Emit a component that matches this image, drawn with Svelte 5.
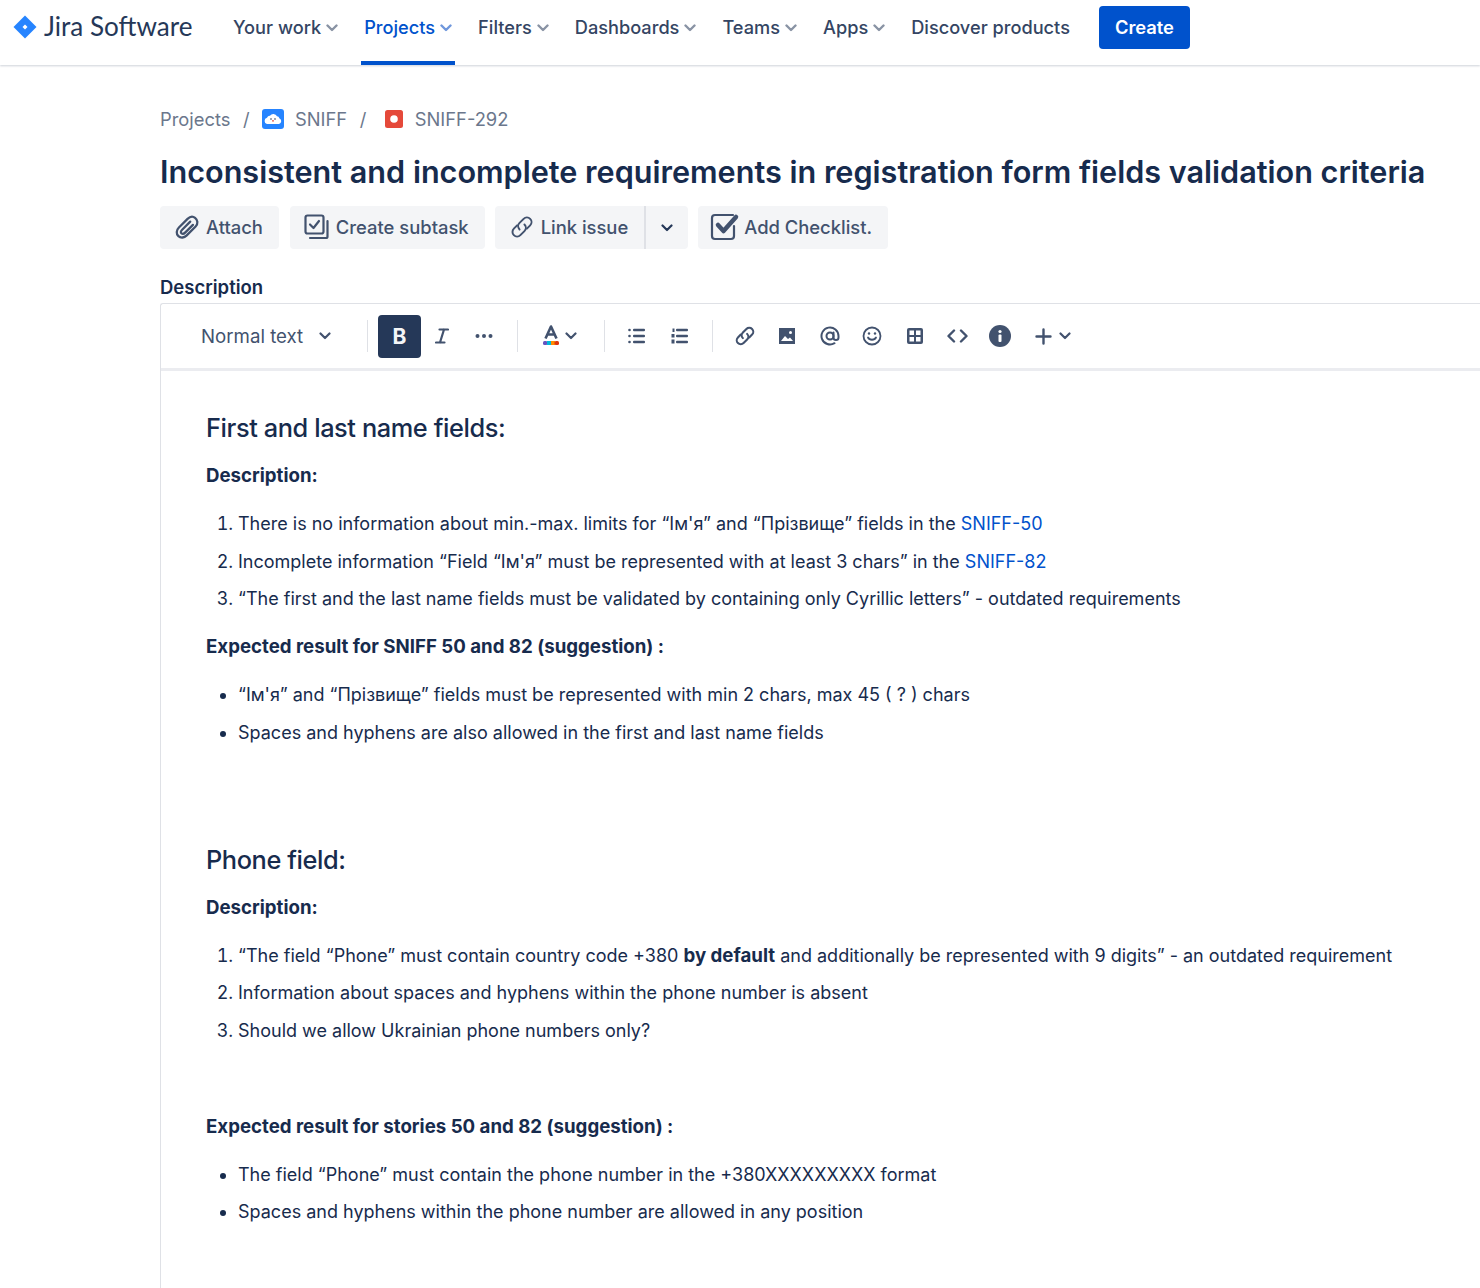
<script>
  const navItems = [
    { label: "Your work", caret: true },
    { label: "Projects", caret: true, active: true },
    { label: "Filters", caret: true },
    { label: "Dashboards", caret: true },
    { label: "Teams", caret: true },
    { label: "Apps", caret: true },
    { label: "Discover products", caret: false },
  ];
</script>

<header class="topbar">
  <div class="logo">
    <svg width="24" height="24" viewBox="0 0 24 24">
      <path d="M12 0.5 L23.5 12 L12 23.5 L0.5 12 Z" fill="#2684ff" />
      <path d="M12 9.5 L14.5 12 L12 14.5 L9.5 12 Z" fill="#fff" />
    </svg>
    <span class="wordmark">Jira Software</span>
  </div>
  <nav class="nav">
    {#each navItems as item}
      <div class="nav-item" class:active={item.active}>
        {item.label}
        {#if item.caret}
          <svg class="caret" width="12" height="8" viewBox="0 0 12 8"><path d="M1.5 1.5 L6 6 L10.5 1.5" fill="none" stroke="currentColor" stroke-width="2.4" stroke-linecap="round" stroke-linejoin="round" /></svg>
        {/if}
      </div>
    {/each}
  </nav>
  <button class="create">Create</button>
</header>

<main class="page">
  <div class="crumbs">
    <span>Projects</span>
    <span class="slash">/</span>
    <svg class="crumb-icon" width="22" height="22" viewBox="0 0 22 22">
      <rect width="22" height="20" y="1" rx="3" fill="#2684ff" />
      <path d="M5 16 a3.200 3.200 0 0 1 0 -6.200 a3 3 0 0 1 3 -2 a4 4 0 0 1 7 0.500 a2.500 2.500 0 0 1 2.300 2 a3 3 0 0 1 -0.300 5.700 Z" fill="#fff" />
      <circle cx="9" cy="11" r="0.800" fill="#253858" />
      <circle cx="13" cy="11" r="0.800" fill="#253858" />
      <circle cx="11" cy="12.800" r="0.900" fill="#e5493a" />
    </svg>
    <span>SNIFF</span>
    <span class="slash">/</span>
    <svg class="crumb-icon bug" width="18" height="18" viewBox="0 0 18 18">
      <rect width="18" height="18" rx="2.500" fill="#e5493a" />
      <circle cx="9" cy="9" r="3.800" fill="#fff" />
    </svg>
    <span>SNIFF-292</span>
  </div>

  <h1>Inconsistent and incomplete requirements in registration form fields validation criteria</h1>

  <div class="actions">
    <button class="action attach">
      <span class="slot">
        <svg width="28" height="28" viewBox="0 0 26 26" fill="none" stroke="#42526e" stroke-width="2.100" stroke-linecap="round"><path d="M20.500 4.500 C18 2.500 15.500 3.500 13.500 5.500 L5.500 13.500 C3 16 2.800 19.500 5 21.500 C7.200 23.500 10.500 23 12.500 21 L21 12.500 C23.500 10 23 6.500 20.500 4.500 M16 8 L8.500 15.500 C7 17 7 18.200 8 19 C9 19.800 10 19.600 11.500 18 L18.500 11" /></svg>
      </span>
      Attach
    </button>
    <button class="action">
      <span class="slot">
        <svg width="26" height="26" viewBox="0 0 26 26" fill="none" stroke="#42526e" stroke-width="2.200" stroke-linecap="round" stroke-linejoin="round"><rect x="1.500" y="1.500" width="18" height="18" rx="2" /><path d="M6 10.500 L9.500 14 L15 7" /><path d="M6 24 H22 a1.500 1.500 0 0 0 1.500 -1.500 V7" /></svg>
      </span>
      Create subtask
    </button>
    <div class="split">
      <button class="action joined">
        <span class="slot">
          <svg width="34" height="34" viewBox="0 0 26 26" fill="none" stroke="#42526e" stroke-width="1.700" stroke-linecap="round"><g transform="rotate(-45 13 13)"><path d="M11 9 H7 a4 4 0 0 0 0 8 H12 a4 4 0 0 0 4 -4" /><path d="M15 17 H19 a4 4 0 0 0 0 -8 H14 a4 4 0 0 0 -4 4" /></g></svg>
        </span>
        Link issue
      </button>
      <button class="action more">
        <svg width="12" height="8" viewBox="0 0 12 8"><path d="M1.500 1.500 L6 6 L10.500 1.500" fill="none" stroke="#253858" stroke-width="2.200" stroke-linecap="round" stroke-linejoin="round" /></svg>
      </button>
    </div>
    <button class="action">
      <span class="slot">
        <svg width="30" height="28" viewBox="0 0 30 28" fill="none" stroke="#42526e" stroke-linecap="round" stroke-linejoin="round"><path d="M23 2 H5 a3 3 0 0 0 -3 3 V23 a3 3 0 0 0 3 3 H21 a3 3 0 0 0 3 -3 V13" stroke-width="2.200" /><path d="M8 12 L13.500 18 L26 4" stroke-width="4.500" /></svg>
      </span>
      Add Checklist.
    </button>
  </div>

  <h2 class="field-label">Description</h2>

  <section class="editor">
    <div class="toolbar">
      <div class="style-picker">
        Normal text
        <svg width="12" height="8" viewBox="0 0 12 8"><path d="M1.500 1.500 L6 6 L10.500 1.500" fill="none" stroke="#42526e" stroke-width="2.200" stroke-linecap="round" stroke-linejoin="round" /></svg>
      </div>
      <span class="sep sep-a"></span>
      <button class="tool bold">B</button>
      <button class="tool italic">
        <svg width="14" height="16" viewBox="0 0 14 16" fill="none" stroke="#42526e" stroke-width="2.200" stroke-linecap="round"><path d="M4.500 1.500 H13 M1 14.500 H9.500 M9 1.500 L5 14.500" /></svg>
      </button>
      <button class="tool">
        <svg width="18" height="4" viewBox="0 0 18 4" fill="#42526e"><circle cx="2.500" cy="2" r="2" /><circle cx="9" cy="2" r="2" /><circle cx="15.500" cy="2" r="2" /></svg>
      </button>
      <span class="sep sep-b"></span>
      <div class="color-tool">
        <svg width="18" height="22" viewBox="0 0 18 22">
          <path d="M3.500 13.500 L9 1.500 L14.500 13.500 M5.500 9.500 H12.500" fill="none" stroke="#42526e" stroke-width="2.600" stroke-linejoin="round" />
          <rect x="1" y="16" width="4.500" height="4" rx="1.500" fill="#6554c0" />
          <rect x="5" y="16" width="4" height="4" fill="#00b8d9" />
          <rect x="9" y="16" width="4" height="4" fill="#ff8b00" />
          <rect x="12.500" y="16" width="4.500" height="4" rx="1.500" fill="#de350b" />
        </svg>
        <svg width="12" height="8" viewBox="0 0 12 8"><path d="M1.500 1.500 L6 6 L10.500 1.500" fill="none" stroke="#42526e" stroke-width="2.200" stroke-linecap="round" stroke-linejoin="round" /></svg>
      </div>
      <span class="sep sep-c"></span>
      <button class="tool">
        <svg width="17" height="16" viewBox="0 0 17 16" fill="#42526e"><circle cx="1.500" cy="2" r="1.300" /><circle cx="1.500" cy="8" r="1.300" /><circle cx="1.500" cy="14" r="1.300" /><rect x="5" y="0.800" width="12" height="2.400" rx="1" /><rect x="5" y="6.800" width="12" height="2.400" rx="1" /><rect x="5" y="12.800" width="12" height="2.400" rx="1" /></svg>
      </button>
      <button class="tool">
        <svg width="17" height="16" viewBox="0 0 17 16" fill="#42526e"><rect x="1.500" y="0.500" width="2" height="3.500" /><rect x="0.500" y="6" width="3" height="3.500" /><rect x="0.500" y="11.500" width="3" height="4" /><rect x="5" y="0.800" width="12" height="2.400" rx="1" /><rect x="5" y="6.800" width="12" height="2.400" rx="1" /><rect x="5" y="12.800" width="12" height="2.400" rx="1" /></svg>
      </button>
      <span class="sep sep-d"></span>
      <button class="tool">
        <svg width="26" height="26" viewBox="0 0 26 26" fill="none" stroke="#42526e" stroke-width="2.100" stroke-linecap="round"><g transform="rotate(-45 13 13)"><path d="M11 9 H7 a4 4 0 0 0 0 8 H12 a4 4 0 0 0 4 -4" /><path d="M15 17 H19 a4 4 0 0 0 0 -8 H14 a4 4 0 0 0 -4 4" /></g></svg>
      </button>
      <button class="tool">
        <svg width="16" height="16" viewBox="0 0 16 16"><rect width="16" height="16" fill="#42526e" /><circle cx="11.500" cy="4.500" r="1.500" fill="#fff" /><path d="M2 13 L6 8 L9 11 L11 9.500 L14 13 Z" fill="#fff" /></svg>
      </button>
      <button class="tool">
        <svg width="20" height="20" viewBox="0 0 20 20" fill="none" stroke="#42526e" stroke-width="2" stroke-linecap="round"><circle cx="10" cy="10" r="3.500" /><path d="M13.500 6.500 V11.500 a2.500 2.500 0 0 0 5 0 V10 a8.500 8.500 0 1 0 -4 7.200" /></svg>
      </button>
      <button class="tool">
        <svg width="20" height="20" viewBox="0 0 20 20" fill="none" stroke="#42526e" stroke-width="1.800" stroke-linecap="round"><circle cx="10" cy="10" r="8.500" /><path d="M6 11.500 C7.500 14.500 12.500 14.500 14 11.500" /><circle cx="7" cy="7.500" r="1.200" fill="#42526e" stroke="none" /><circle cx="13" cy="7.500" r="1.200" fill="#42526e" stroke="none" /></svg>
      </button>
      <button class="tool">
        <svg width="16" height="16" viewBox="0 0 16 16"><rect width="16" height="16" rx="2" fill="#42526e" /><rect x="2.500" y="2.500" width="4.500" height="4.500" fill="#fff" /><rect x="9" y="2.500" width="4.500" height="4.500" fill="#fff" /><rect x="2.500" y="9" width="4.500" height="4.500" fill="#fff" /><rect x="9" y="9" width="4.500" height="4.500" fill="#fff" /></svg>
      </button>
      <button class="tool">
        <svg width="21" height="14" viewBox="0 0 21 14" fill="none" stroke="#42526e" stroke-width="2.400" stroke-linecap="round" stroke-linejoin="round"><path d="M7 1.500 L1.500 7 L7 12.500 M14 1.500 L19.500 7 L14 12.500" /></svg>
      </button>
      <button class="tool">
        <svg width="22" height="22" viewBox="0 0 22 22"><circle cx="11" cy="11" r="11" fill="#42526e" /><circle cx="11" cy="6.500" r="1.600" fill="#fff" /><rect x="9.500" y="9.500" width="3" height="7.500" rx="1" fill="#fff" /></svg>
      </button>
      <div class="insert">
        <svg width="17" height="17" viewBox="0 0 17 17" fill="none" stroke="#42526e" stroke-width="2.400" stroke-linecap="round"><path d="M8.500 1.500 V15.500 M1.500 8.500 H15.500" /></svg>
        <svg width="12" height="8" viewBox="0 0 12 8"><path d="M1.500 1.500 L6 6 L10.500 1.500" fill="none" stroke="#42526e" stroke-width="2.200" stroke-linecap="round" stroke-linejoin="round" /></svg>
      </div>
    </div>

    <div class="doc">
      <h3>First and last name fields:</h3>
      <p><strong>Description:</strong></p>
      <ol>
        <li>There is no information about min.-max. limits for “Ім'я” and “Прізвище” fields in the <span class="link">SNIFF-50</span></li>
        <li>Incomplete information “Field “Ім'я” must be represented with at least 3 chars” in the <span class="link">SNIFF-82</span></li>
        <li>“The first and the last name fields must be validated by containing only Cyrillic letters” - outdated requirements</li>
      </ol>
      <p class="after-list"><strong>Expected result for SNIFF 50 and 82 (suggestion) :</strong></p>
      <ul>
        <li>“Ім'я” and “Прізвище” fields must be represented with min 2 chars, max 45 ( ? ) chars</li>
        <li>Spaces and hyphens are also allowed in the first and last name fields</li>
      </ul>

      <h3 class="second">Phone field:</h3>
      <p><strong>Description:</strong></p>
      <ol>
        <li>“The field “Phone” must contain country code +380 <strong>by default</strong> and additionally be represented with 9 digits” - an outdated requirement</li>
        <li>Information about spaces and hyphens within the phone number is absent</li>
        <li>Should we allow Ukrainian phone numbers only?</li>
      </ol>
      <p class="spaced"><strong>Expected result for stories 50 and 82 (suggestion) :</strong></p>
      <ul>
        <li>The field “Phone” must contain the phone number in the +380XXXXXXXXX format</li>
        <li>Spaces and hyphens within the phone number are allowed in any position</li>
      </ul>
    </div>
  </section>
</main>

<style>
  :global(body) {
    margin: 0;
    background: #fff;
    font-family: Inter, "Liberation Sans", sans-serif;
    color: #172b4d;
    overflow: hidden;
  }

  button {
    font-family: inherit;
    border: none;
    cursor: pointer;
  }

  .topbar {
    display: flex;
    align-items: stretch;
    height: 65px;
    padding-left: 13px;
    box-sizing: border-box;
    box-shadow: 0 1px 2px rgba(9, 30, 66, 0.2);
  }

  .logo {
    display: flex;
    align-items: center;
    gap: 7px;
    width: 217px;
    height: 54px;
  }

  .wordmark {
    font-family: Lato, sans-serif;
    font-size: 26.1px;
    padding-bottom: 2px;
    color: #253858;
  }

  .nav {
    display: flex;
    gap: 20px;
  }

  .nav-item {
    display: flex;
    align-items: center;
    gap: 5px;
    height: 54px;
    padding: 0 3px;
    box-sizing: border-box;
    font-size: 18.2px;
    font-weight: 500;
    color: #344563;
    white-space: nowrap;
  }

  .nav-item.active {
    color: #0052cc;
    border-bottom: 4px solid #0052cc;
    height: 65px;
    padding-bottom: 7px;
  }

  .caret {
    color: #8993a4;
    margin-top: 1px;
  }

  .nav-item.active .caret {
    color: #6f97dc;
  }

  .create {
    align-self: flex-start;
    margin-top: 6px;
    margin-left: 26px;
    width: 91px;
    height: 43px;
    padding: 0 0 2px;
    background: #0052cc;
    color: #fff;
    font-size: 18.33px;
    font-weight: 600;
    border-radius: 4px;
  }

  .page {
    padding-left: 160px;
  }

  .crumbs {
    display: flex;
    align-items: center;
    height: 28px;
    margin-top: 40px;
    font-size: 18.33px;
    color: #6b778c;
  }

  .slash {
    margin: 0 12.5px;
  }

  .crumb-icon {
    margin-right: 11px;
  }

  .crumb-icon.bug {
    margin-left: 6px;
    margin-right: 12px;
  }

  h1 {
    margin: 17px 0 0;
    font-size: 30.6px;
    line-height: 44px;
    font-weight: 600;
    color: #172b4d;
    white-space: nowrap;
  }

  .actions {
    display: flex;
    gap: 10px;
    margin-top: 12px;
  }

  .action {
    display: flex;
    align-items: center;
    gap: 4px;
    height: 43px;
    padding: 0 16px 2px 12px;
    background: #f4f5f7;
    color: #42526e;
    font-size: 18.4px;
    font-weight: 500;
    border-radius: 4px;
    white-space: nowrap;
  }

  .attach {
    margin-right: 1px;
  }

  .slot {
    display: flex;
    justify-content: center;
    width: 30px;
  }

  .split {
    display: flex;
  }

  .joined {
    border-radius: 4px 0 0 4px;
  }

  .more {
    width: 44px;
    padding: 0;
    justify-content: center;
    border-left: 2px solid #dfe1e6;
    border-radius: 0 4px 4px 0;
  }

  .field-label {
    margin: 25px 0 0;
    font-size: 18.5px;
    line-height: 26px;
    font-weight: 600;
    color: #172b4d;
  }

  .editor {
    margin-top: 3px;
    border-left: 1px solid #dfe1e6;
    border-top: 1px solid #dfe1e6;
    border-radius: 3px 0 0 0;
  }

  .toolbar {
    display: flex;
    align-items: center;
    height: 64px;
    border-bottom: 3px solid #ebecf0;
  }

  .style-picker {
    display: flex;
    align-items: center;
    gap: 16px;
    margin-left: 40px;
    font-size: 18.67px;
    font-weight: 400;
    color: #42526e;
  }

  .sep {
    width: 1px;
    height: 32px;
    background: #dfe1e6;
  }

  .sep-a { margin: 0 10px 0 36px; }
  .sep-b { margin: 0 24px 0 11px; }
  .sep-c { margin: 0 11px 0 27px; }
  .sep-d { margin: 0 11px 0 11px; }

  .tool {
    display: flex;
    align-items: center;
    justify-content: center;
    width: 42.5px;
    height: 43px;
    padding: 0;
    background: none;
    border-radius: 4px;
  }

  .tool.bold {
    background: #253858;
    color: #f4f5f7;
    font-size: 21px;
    font-weight: 700;
  }

  .color-tool,
  .insert {
    display: flex;
    align-items: center;
    gap: 5px;
  }

  .insert {
    margin-left: 14px;
    gap: 7px;
  }

  .doc {
    padding: 39px 0 80px 45px;
    font-size: 18px;
    line-height: 28px;
    color: #172b4d;
  }

  h3 {
    margin: 0;
    font-size: 25.33px;
    line-height: 36px;
    font-weight: 500;
    letter-spacing: -0.4px;
    color: #172b4d;
  }

  h3.second {
    margin-top: 95px;
  }

  p {
    margin: 16px 0 0;
  }

  p.after-list {
    margin-top: 20px;
  }

  p.spaced {
    margin-top: 68px;
  }

  strong {
    font-size: 18.67px;
    font-weight: 700;
  }

  ol,
  ul {
    margin: 20px 0 0;
    padding: 0 0 0 32px;
  }

  li {
    margin-top: 9.5px;
    white-space: nowrap;
  }

  li:first-child {
    margin-top: 0;
  }

  .link {
    color: #0052cc;
  }
</style>
